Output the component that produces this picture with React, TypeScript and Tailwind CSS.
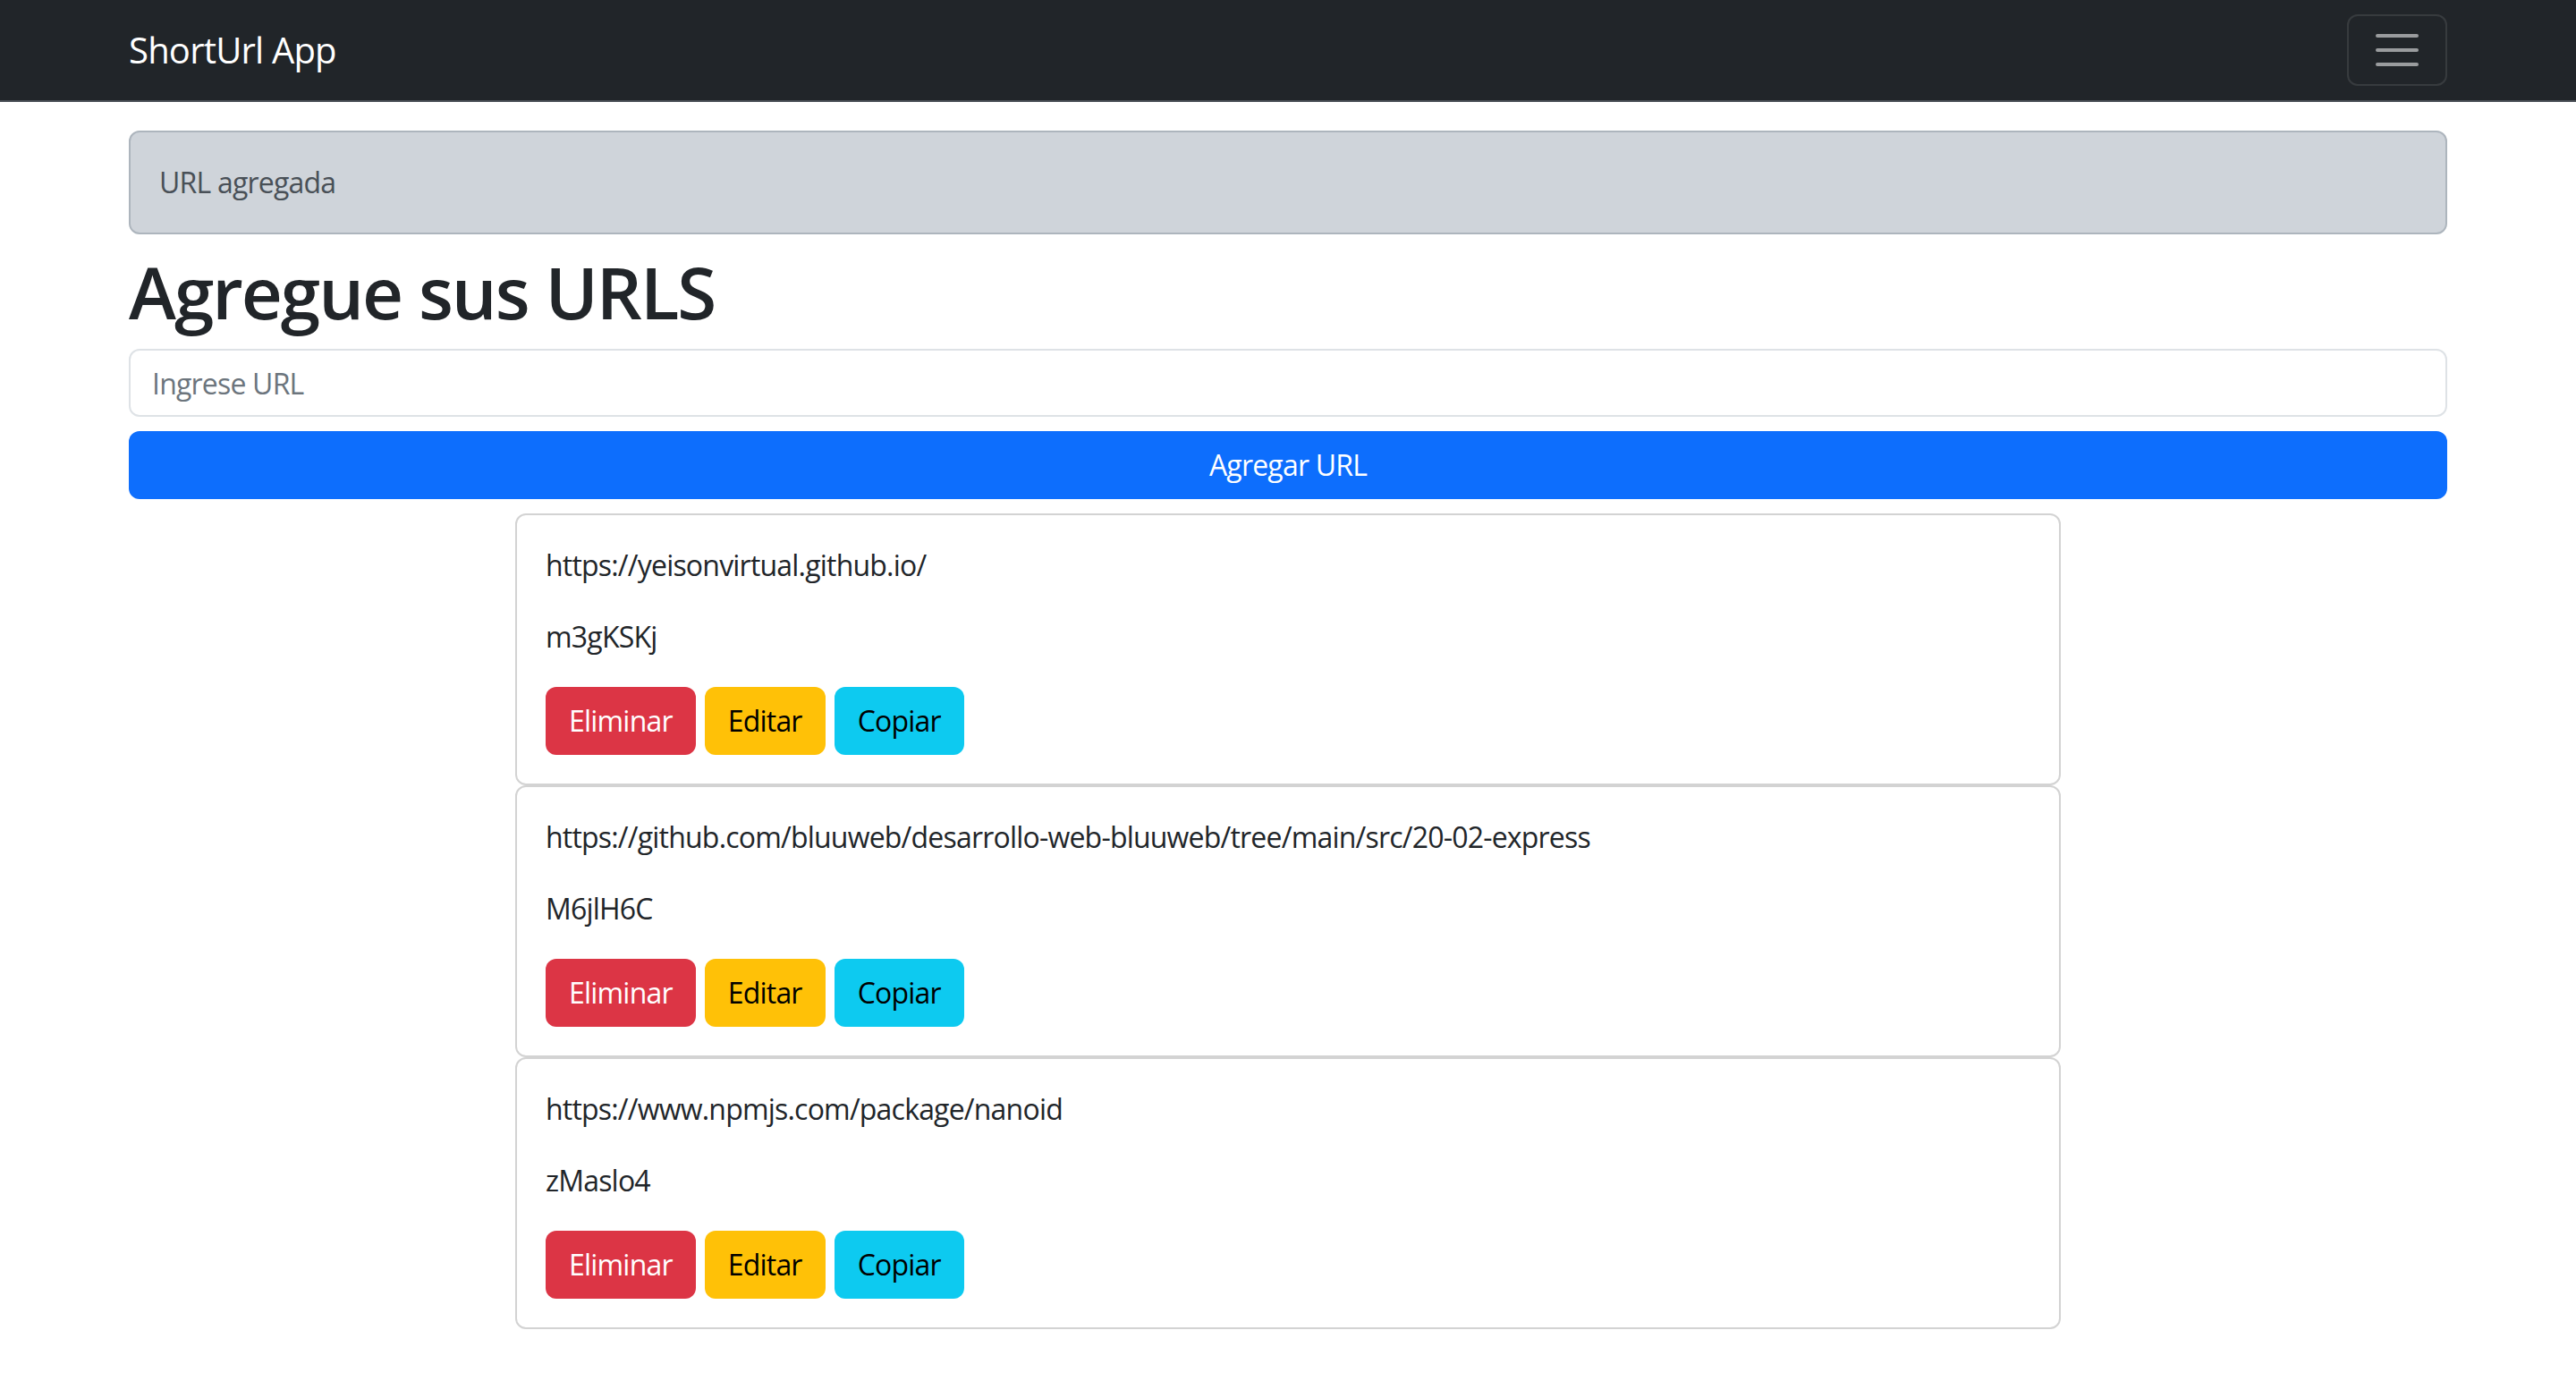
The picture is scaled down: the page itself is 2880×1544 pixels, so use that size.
import React, { useState } from 'react';

interface ShortUrl {
  id: string;
  origin: string;
  nanoid: string;
}

const urls: ShortUrl[] = [
  { id: '1', origin: 'https://yeisonvirtual.github.io/', nanoid: 'm3gKSKj' },
  { id: '2', origin: 'https://github.com/bluuweb/desarrollo-web-bluuweb/tree/main/src/20-02-express', nanoid: 'M6jlH6C' },
  { id: '3', origin: 'https://www.npmjs.com/package/nanoid', nanoid: 'zMaslo4' },
];

function Navbar() {
  return (
    <nav className="bg-[#212529] border-b-2 border-[#494e55] py-4">
      <div className="mx-auto w-[2592px] flex items-center justify-between">
        <a href="#" className="text-[40px] leading-[60px] text-white">
          ShortUrl App
        </a>
        <button className="w-[112px] h-[80px] rounded-[12px] border-2 border-white/10 flex items-center justify-center">
          <svg width="60" height="60" viewBox="0 0 30 30">
            <path
              d="M4 7h22M4 15h22M4 23h22"
              stroke="rgba(255,255,255,0.55)"
              strokeWidth="2"
              strokeLinecap="round"
              fill="none"
            />
          </svg>
        </button>
      </div>
    </nav>
  );
}

export default function App() {
  const [value, setValue] = useState('');

  return (
    <div className="min-h-screen bg-white text-[#212529] font-['Open_Sans','Noto_Sans',sans-serif] text-[32px] leading-[48px] tracking-[-0.025em]">
      <Navbar />

      <main className="mx-auto w-[2592px] mt-8">
        {/* Alert */}
        <div className="mb-4 rounded-[12px] border-2 border-[#adb5bd] bg-[#cfd4da] p-8 text-[#495057]">
          URL agregada
        </div>

        <h1 className="mb-4 text-[80px] leading-[96px] font-semibold tracking-[-0.025em]">Agregue sus URLS</h1>

        <form onSubmit={e => e.preventDefault()}>
          <input
            type="text"
            value={value}
            onChange={e => setValue(e.target.value)}
            placeholder="Ingrese URL"
            className="block w-full h-[76px] rounded-[12px] border-2 border-[#dee2e6] bg-white px-6 text-[32px] tracking-[-0.025em] placeholder:text-[#6c757d] outline-none"
          />
          <button
            type="submit"
            className="mt-4 block w-full h-[76px] rounded-[12px] bg-[#0d6efd] text-white text-[32px]"
          >
            Agregar URL
          </button>
        </form>

        {/* Lista de URLs */}
        <div className="mx-auto mt-4 w-[1728px]">
          {urls.map(url => (
            <div key={url.id} className="rounded-[12px] border-2 border-[#d3d3d3] bg-white p-8">
              <p className="mb-8">{url.origin}</p>
              <p className="mb-8">{url.nanoid}</p>
              <div className="flex gap-[10px]">
                <button className="rounded-[12px] border-2 border-transparent bg-[#dc3545] px-6 py-3 text-white">Eliminar</button>
                <button className="rounded-[12px] border-2 border-transparent bg-[#ffc107] px-6 py-3 text-black">Editar</button>
                <button className="rounded-[12px] border-2 border-transparent bg-[#0dcaf0] px-6 py-3 text-black">Copiar</button>
              </div>
            </div>
          ))}
        </div>
      </main>
    </div>
  );
}
